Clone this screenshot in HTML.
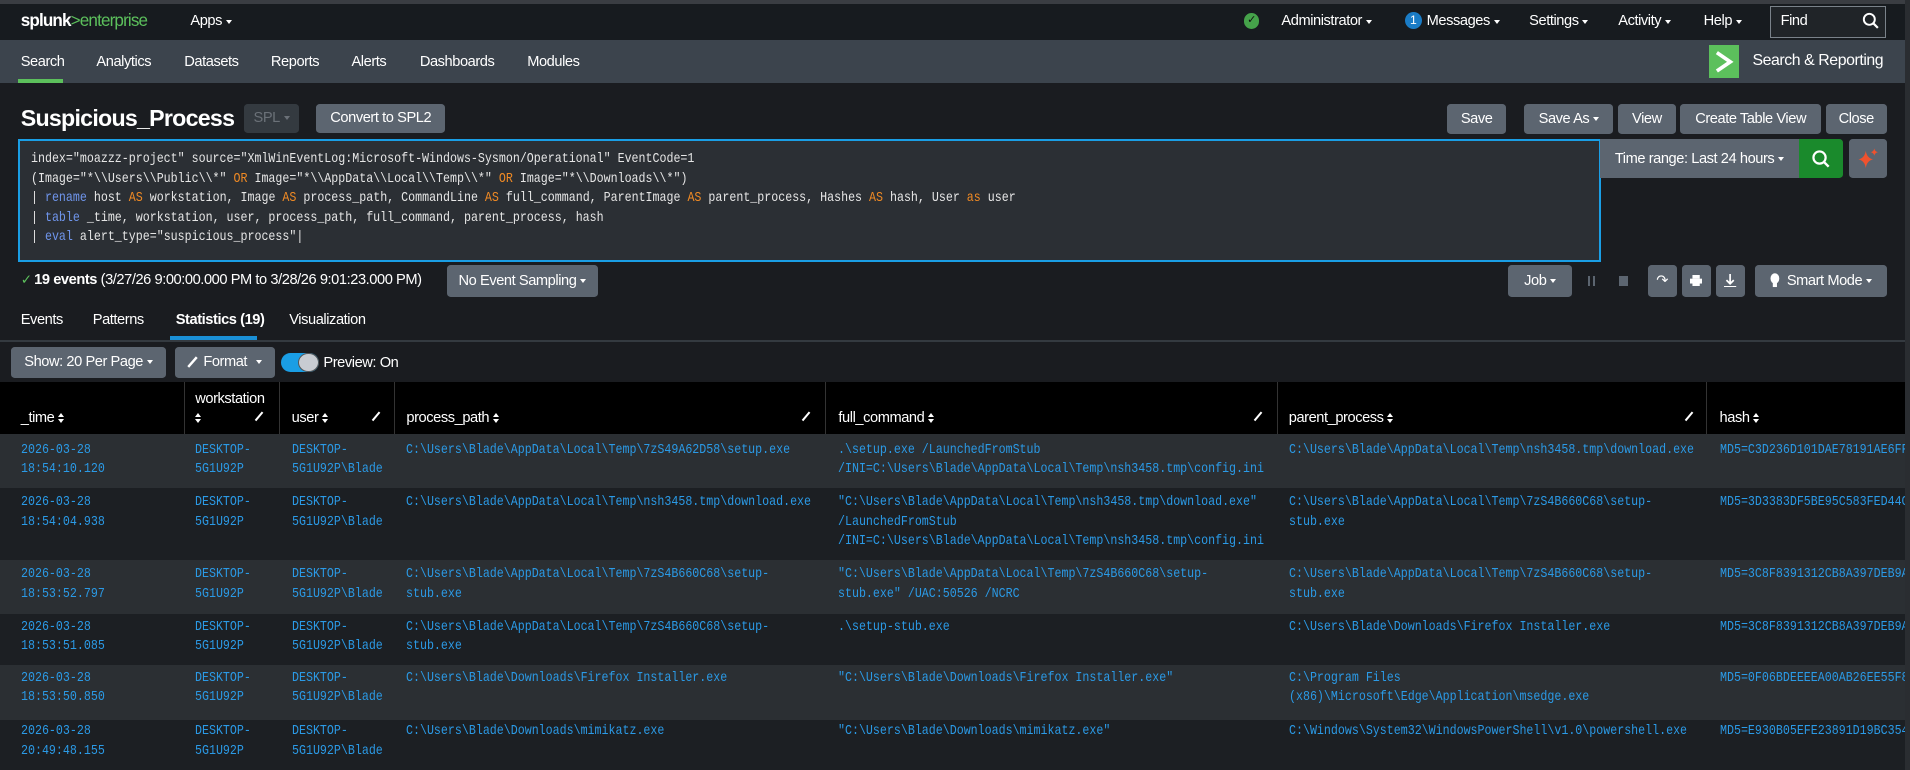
<!DOCTYPE html>
<html><head><meta charset="utf-8"><style>
*{margin:0;padding:0;box-sizing:border-box}
html,body{width:1910px;height:769px;overflow:hidden;background:#1a1c20}
#w{position:absolute;left:0;top:0;width:1565px;height:631px;zoom:1.2204;background:#1a1c20;font-family:"Liberation Sans",sans-serif;color:#fff;font-size:12px;letter-spacing:-0.35px;overflow:hidden}
.a{position:absolute;white-space:nowrap}
.btn{position:absolute;background:#5c6570;border-radius:3px;color:#fff;font-size:12px;display:flex;align-items:center;justify-content:center}
.m{font-family:"Liberation Mono",monospace;font-size:11px;letter-spacing:0;line-height:16px;white-space:pre;color:#2b9ae6;transform:scaleX(0.868);transform-origin:0 0}
.q{font-family:"Liberation Mono",monospace;font-size:11px;letter-spacing:0;color:#e6e6e6;white-space:pre;transform:scaleX(0.868);transform-origin:0 0}
.o{color:#f08a24}.k{color:#6f95ec}
.tri{display:inline-block;width:0;height:0;border-left:3px solid transparent;border-right:3px solid transparent;border-top:4px solid #fff;vertical-align:middle;margin-left:3px}
.srt{display:inline-block;width:6px;height:9px;vertical-align:middle;margin-left:3px;position:relative}
.srt:before{content:"";position:absolute;left:0;top:0;border-left:3px solid transparent;border-right:3px solid transparent;border-bottom:4px solid #fff}
.srt:after{content:"";position:absolute;left:0;top:5px;border-left:3px solid transparent;border-right:3px solid transparent;border-top:4px solid #fff}
.pen{position:absolute;width:2px;height:9px;background:#fff;transform:rotate(40deg)}
.row{position:absolute;left:0;width:1565px}
.hd{position:absolute;top:313px;height:43px;border-left:1px solid #333}
</style></head><body><div id="w">
<div class="a" style="left:0;top:0;width:1565px;height:3px;background:#3a3d42"></div>
<div class="a" style="left:0;top:3px;width:1565px;height:30px;background:#171b1f"></div>
<div class="a" style="left:17px;top:9px;font-size:14px;font-weight:bold;letter-spacing:-0.7px">splunk<span style="color:#5cc05c;font-weight:normal">&gt;enterprise</span></div>
<div class="a" style="left:156px;top:11px">Apps<span class="tri"></span></div>
<div class="a" style="left:1019px;top:11px;width:13px;height:13px;border-radius:50%;background:#45a24a;color:#111;font-size:9px;text-align:center;line-height:13px">✓</div>
<div class="a" style="left:1050px;top:11px">Administrator<span class="tri"></span></div>
<div class="a" style="left:1151px;top:10px;width:14px;height:14px;border-radius:50%;background:#1a7cc6;font-size:10px;text-align:center;line-height:14px">1</div>
<div class="a" style="left:1169px;top:11px">Messages<span class="tri"></span></div>
<div class="a" style="left:1253px;top:11px">Settings<span class="tri"></span></div>
<div class="a" style="left:1326px;top:11px">Activity<span class="tri"></span></div>
<div class="a" style="left:1396px;top:11px">Help<span class="tri"></span></div>
<div class="a" style="left:1450px;top:5px;width:95px;height:26px;border:1px solid #7a828a;background:#202428"></div>
<div class="a" style="left:1459px;top:11px">Find</div>
<svg class="a" style="left:1526px;top:10px" width="14" height="14" viewBox="0 0 14 14"><circle cx="6" cy="6" r="4.5" stroke="#fff" stroke-width="1.6" fill="none"/><path d="M9.5 9.5 13 13" stroke="#fff" stroke-width="1.8"/></svg>
<div class="a" style="left:0;top:33px;width:1565px;height:35px;background:#3c444d"></div>
<div class="a" style="left:17px;top:44px">Search</div>
<div class="a" style="left:79px;top:44px">Analytics</div>
<div class="a" style="left:151px;top:44px">Datasets</div>
<div class="a" style="left:222px;top:44px">Reports</div>
<div class="a" style="left:288px;top:44px">Alerts</div>
<div class="a" style="left:344px;top:44px">Dashboards</div>
<div class="a" style="left:432px;top:44px">Modules</div>
<div class="a" style="left:15px;top:65px;width:37px;height:3px;background:#5cc05c"></div>
<div class="a" style="left:1400px;top:37px;width:25px;height:27px;background:#5cc05c"></div>
<svg class="a" style="left:1403px;top:40px" width="19" height="21" viewBox="0 0 19 21"><path d="M4 3 15 10.5 4 18" stroke="#fff" stroke-width="3" fill="none"/></svg>
<div class="a" style="left:1436px;top:43px;font-size:13px">Search &amp; Reporting</div>
<div class="a" style="left:17px;top:86px;font-size:19px;font-weight:bold;letter-spacing:-0.6px">Suspicious_Process</div>
<div class="btn" style="left:200px;top:85px;width:45px;height:24px;background:#343a40;color:#6b7178">SPL<span class="tri" style="border-top-color:#6b7178"></span></div>
<div class="btn" style="left:259px;top:85px;width:106px;height:24px">Convert to SPL2</div>
<div class="btn" style="left:1186px;top:85px;width:48px;height:25px">Save</div>
<div class="btn" style="left:1249px;top:85px;width:73px;height:25px">Save As<span class="tri"></span></div>
<div class="btn" style="left:1326px;top:85px;width:47px;height:25px">View</div>
<div class="btn" style="left:1377px;top:85px;width:115px;height:25px">Create Table View</div>
<div class="btn" style="left:1496px;top:85px;width:50px;height:25px">Close</div>
<div class="a" style="left:15px;top:114px;width:1297px;height:101px;border:2px solid #1a9ee5;background:#2b2f34"></div>
<div class="a q" style="left:25px;top:123px;line-height:16px">index="moazzz-project" source="XmlWinEventLog:Microsoft-Windows-Sysmon/Operational" EventCode=1
(Image="*\\Users\\Public\\*" <span class="o">OR</span> Image="*\\AppData\\Local\\Temp\\*" <span class="o">OR</span> Image="*\\Downloads\\*")
| <span class="k">rename</span> host <span class="o">AS</span> workstation, Image <span class="o">AS</span> process_path, CommandLine <span class="o">AS</span> full_command, ParentImage <span class="o">AS</span> parent_process, Hashes <span class="o">AS</span> hash, User <span class="o">as</span> user
| <span class="k">table</span> _time, workstation, user, process_path, full_command, parent_process, hash
| <span class="k">eval</span> alert_type="suspicious_process"|</div>
<div class="btn" style="left:1311px;top:114px;width:163px;height:32px;border-radius:0">Time range: Last 24 hours<span class="tri"></span></div>
<div class="btn" style="left:1474px;top:114px;width:36px;height:32px;background:#1a8a2c;border-radius:0 3px 3px 0"></div>
<svg class="a" style="left:1484px;top:122px" width="16" height="16" viewBox="0 0 16 16"><circle cx="7" cy="7" r="5" stroke="#fff" stroke-width="1.8" fill="none"/><path d="M10.5 10.5 14.5 14.5" stroke="#fff" stroke-width="2"/></svg>
<div class="btn" style="left:1515px;top:114px;width:31px;height:32px"></div>
<svg class="a" style="left:1521px;top:120px" width="20" height="20" viewBox="0 0 20 20"><path d="M8 4 Q9 10 14 11 Q9 12 8 18 Q7 12 2 11 Q7 10 8 4Z" fill="#f0522e"/><path d="M15 2 Q15.5 4.5 18 5 Q15.5 5.5 15 8 Q14.5 5.5 12 5 Q14.5 4.5 15 2Z" fill="#f0522e"/></svg>
<div class="a" style="left:17px;top:223px;color:#5cc05c;font-size:11px">✓</div>
<div class="a" style="left:28px;top:223px"><b>19 events</b> (3/27/26 9:00:00.000 PM to 3/28/26 9:01:23.000 PM)</div>
<div class="btn" style="left:366px;top:217px;width:124px;height:26px">No Event Sampling<span class="tri"></span></div>
<div class="btn" style="left:1236px;top:217px;width:52px;height:26px">Job<span class="tri"></span></div>
<div class="a" style="left:1301px;top:226px;width:2px;height:8px;background:#5c6570"></div>
<div class="a" style="left:1305px;top:226px;width:2px;height:8px;background:#5c6570"></div>
<div class="a" style="left:1327px;top:226px;width:7px;height:8px;background:#5c6570"></div>
<div class="btn" style="left:1350px;top:217px;width:24px;height:26px">↷</div>
<div class="btn" style="left:1378px;top:217px;width:24px;height:26px"><svg width="10" height="9"><rect x="2" y="0" width="6" height="3" fill="#fff"/><rect x="0" y="3" width="10" height="4" fill="#fff"/><rect x="2" y="6" width="6" height="3" fill="#fff"/></svg></div>
<div class="btn" style="left:1406px;top:217px;width:24px;height:26px"><svg width="10" height="11"><path d="M5 0V8M2 5 5 8 8 5M0 10.5H10" stroke="#fff" stroke-width="1.4" fill="none"/></svg></div>
<div class="btn" style="left:1438px;top:217px;width:108px;height:26px"><svg width="8" height="12" style="margin-right:6px"><ellipse cx="4" cy="4.5" rx="3.6" ry="4.3" fill="#fff"/><rect x="2.3" y="8" width="3.4" height="3.5" fill="#fff"/></svg>Smart Mode<span class="tri"></span></div>
<div class="a" style="left:17px;top:256px">Events</div>
<div class="a" style="left:76px;top:256px">Patterns</div>
<div class="a" style="left:144px;top:256px;font-weight:bold">Statistics (19)</div>
<div class="a" style="left:237px;top:256px">Visualization</div>
<div class="a" style="left:139px;top:275px;width:72px;height:4px;background:#1a8fd6"></div>
<div class="a" style="left:0;top:279px;width:1565px;height:1px;background:#343a40"></div>
<div class="btn" style="left:9px;top:284px;width:127px;height:26px">Show: 20 Per Page<span class="tri"></span></div>
<div class="btn" style="left:143px;top:284px;width:82px;height:26px"><svg width="9" height="10" style="margin-right:4px"><path d="M1 9 8 1" stroke="#fff" stroke-width="2"/></svg>Format<span class="tri" style="margin-left:7px"></span></div>
<div class="a" style="left:230px;top:289px;width:31px;height:16px;border-radius:8px;background:#1a9ee5"></div>
<div class="a" style="left:244px;top:289px;width:17px;height:16px;border-radius:50%;background:#c8ccd2;border:1px solid #555"></div>
<div class="a" style="left:265px;top:291px">Preview: On</div>
<div class="a" style="left:0;top:313px;width:1565px;height:43px;background:#000"></div>
<div class="hd" style="left:151px"></div><div class="hd" style="left:229px"></div><div class="hd" style="left:323px"></div><div class="hd" style="left:676px"></div><div class="hd" style="left:1046px"></div><div class="hd" style="left:1398px"></div>
<div class="a" style="left:17px;top:336px">_time<span class="srt"></span></div>
<div class="a" style="left:160px;top:320px">workstation</div>
<div class="a" style="left:160px;top:336px"><span class="srt" style="margin:0"></span></div>
<div class="a" style="left:239px;top:336px">user<span class="srt"></span></div>
<div class="a" style="left:333px;top:336px">process_path<span class="srt"></span></div>
<div class="a" style="left:687px;top:336px">full_command<span class="srt"></span></div>
<div class="a" style="left:1056px;top:336px">parent_process<span class="srt"></span></div>
<div class="a" style="left:1409px;top:336px">hash<span class="srt"></span></div>
<div class="pen" style="left:211px;top:337px"></div><div class="pen" style="left:307px;top:337px"></div><div class="pen" style="left:660px;top:337px"></div><div class="pen" style="left:1030px;top:337px"></div><div class="pen" style="left:1383px;top:337px"></div>
<div class="row" style="top:356px;height:44px;background:#2b2f33"></div>
<div class="row" style="top:400px;height:59px;background:#1c1f23"></div>
<div class="row" style="top:459px;height:44px;background:#2b2f33"></div>
<div class="row" style="top:503px;height:42px;background:#1c1f23"></div>
<div class="row" style="top:545px;height:45px;background:#2b2f33"></div>
<div class="row" style="top:590px;height:41px;background:#1c1f23"></div>
<div class="a m" style="left:17px;top:361px">2026-03-28
18:54:10.120</div>
<div class="a m" style="left:160px;top:361px">DESKTOP-
5G1U92P</div>
<div class="a m" style="left:239px;top:361px">DESKTOP-
5G1U92P\Blade</div>
<div class="a m" style="left:333px;top:361px">C:\Users\Blade\AppData\Local\Temp\7zS49A62D58\setup.exe</div>
<div class="a m" style="left:687px;top:361px">.\setup.exe /LaunchedFromStub
/INI=C:\Users\Blade\AppData\Local\Temp\nsh3458.tmp\config.ini</div>
<div class="a m" style="left:1056px;top:361px">C:\Users\Blade\AppData\Local\Temp\nsh3458.tmp\download.exe</div>
<div class="a m" style="left:1409px;top:361px">MD5=C3D236D101DAE78191AE6FF</div>
<div class="a m" style="left:17px;top:404px">2026-03-28
18:54:04.938</div>
<div class="a m" style="left:160px;top:404px">DESKTOP-
5G1U92P</div>
<div class="a m" style="left:239px;top:404px">DESKTOP-
5G1U92P\Blade</div>
<div class="a m" style="left:333px;top:404px">C:\Users\Blade\AppData\Local\Temp\nsh3458.tmp\download.exe</div>
<div class="a m" style="left:687px;top:404px">"C:\Users\Blade\AppData\Local\Temp\nsh3458.tmp\download.exe"
/LaunchedFromStub
/INI=C:\Users\Blade\AppData\Local\Temp\nsh3458.tmp\config.ini</div>
<div class="a m" style="left:1056px;top:404px">C:\Users\Blade\AppData\Local\Temp\7zS4B660C68\setup-
stub.exe</div>
<div class="a m" style="left:1409px;top:404px">MD5=3D3383DF5BE95C583FED44C</div>
<div class="a m" style="left:17px;top:463px">2026-03-28
18:53:52.797</div>
<div class="a m" style="left:160px;top:463px">DESKTOP-
5G1U92P</div>
<div class="a m" style="left:239px;top:463px">DESKTOP-
5G1U92P\Blade</div>
<div class="a m" style="left:333px;top:463px">C:\Users\Blade\AppData\Local\Temp\7zS4B660C68\setup-
stub.exe</div>
<div class="a m" style="left:687px;top:463px">"C:\Users\Blade\AppData\Local\Temp\7zS4B660C68\setup-
stub.exe" /UAC:50526 /NCRC</div>
<div class="a m" style="left:1056px;top:463px">C:\Users\Blade\AppData\Local\Temp\7zS4B660C68\setup-
stub.exe</div>
<div class="a m" style="left:1409px;top:463px">MD5=3C8F8391312CB8A397DEB9A</div>
<div class="a m" style="left:17px;top:506px">2026-03-28
18:53:51.085</div>
<div class="a m" style="left:160px;top:506px">DESKTOP-
5G1U92P</div>
<div class="a m" style="left:239px;top:506px">DESKTOP-
5G1U92P\Blade</div>
<div class="a m" style="left:333px;top:506px">C:\Users\Blade\AppData\Local\Temp\7zS4B660C68\setup-
stub.exe</div>
<div class="a m" style="left:687px;top:506px">.\setup-stub.exe</div>
<div class="a m" style="left:1056px;top:506px">C:\Users\Blade\Downloads\Firefox Installer.exe</div>
<div class="a m" style="left:1409px;top:506px">MD5=3C8F8391312CB8A397DEB9A</div>
<div class="a m" style="left:17px;top:548px">2026-03-28
18:53:50.850</div>
<div class="a m" style="left:160px;top:548px">DESKTOP-
5G1U92P</div>
<div class="a m" style="left:239px;top:548px">DESKTOP-
5G1U92P\Blade</div>
<div class="a m" style="left:333px;top:548px">C:\Users\Blade\Downloads\Firefox Installer.exe</div>
<div class="a m" style="left:687px;top:548px">"C:\Users\Blade\Downloads\Firefox Installer.exe"</div>
<div class="a m" style="left:1056px;top:548px">C:\Program Files
(x86)\Microsoft\Edge\Application\msedge.exe</div>
<div class="a m" style="left:1409px;top:548px">MD5=0F06BDEEEEA00AB26EE55F8</div>
<div class="a m" style="left:17px;top:592px">2026-03-28
20:49:48.155</div>
<div class="a m" style="left:160px;top:592px">DESKTOP-
5G1U92P</div>
<div class="a m" style="left:239px;top:592px">DESKTOP-
5G1U92P\Blade</div>
<div class="a m" style="left:333px;top:592px">C:\Users\Blade\Downloads\mimikatz.exe</div>
<div class="a m" style="left:687px;top:592px">"C:\Users\Blade\Downloads\mimikatz.exe"</div>
<div class="a m" style="left:1056px;top:592px">C:\Windows\System32\WindowsPowerShell\v1.0\powershell.exe</div>
<div class="a m" style="left:1409px;top:592px">MD5=E930B05EFE23891D19BC354</div>
<div class="a" style="left:1561px;top:0;width:4px;height:631px;background:#2a2d31"></div>
</div></body></html>
